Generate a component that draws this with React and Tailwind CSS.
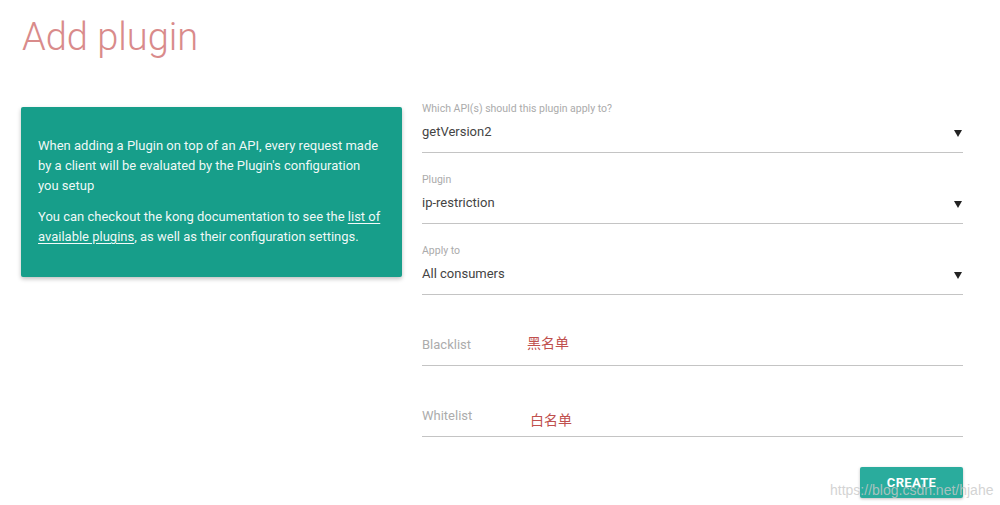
import React from 'react';

const Arrow = () => (
  <svg width="8" height="7" viewBox="0 0 8 7" className="mt-[3px] mr-[1px]">
    <path d="M0 0 L8 0 L4 7 Z" fill="#222" />
  </svg>
);

const SelectField = ({ label, value }) => (
  <div className="h-[71px] flex flex-col pt-[20px] border-b border-[#c4c4c4]">
    <div className="text-[10.5px] leading-[14px] text-[#ababab]">{label}</div>
    <div className="mt-[6px] flex items-center justify-between leading-[20px] text-[13px] text-[#444]">
      <span>{value}</span>
      <Arrow />
    </div>
  </div>
);

const TextField = ({ placeholder, note, noteClass }) => (
  <div className="h-[71px] flex flex-col pt-[40px] border-b border-[#c4c4c4]">
    <div className="flex items-start leading-[20px] text-[13px]">
      <span className="w-[105px] text-[#acacac]">{placeholder}</span>
      <span className={noteClass}>{note}</span>
    </div>
  </div>
);

export default function App() {
  return (
    <div
      className="relative w-[1000px] h-[505px] bg-white overflow-hidden px-[21px]"
      style={{ fontFamily: 'Roboto, "Noto Sans CJK SC", sans-serif' }}
    >
      <h1 className="pt-[18px] pl-[1px] text-[38px] leading-none font-light text-[#d98b8b]">
        Add plugin
      </h1>

      <div className="flex gap-[20px] mt-[26px]">
        <div className="w-[381px] h-[170px] mt-[25px] bg-[#179e8a] rounded-[2px] shadow-[0_2px_4px_rgba(0,0,0,0.25)] pl-[17px] pr-[20px] pt-[29px] text-[13px] leading-[20px] text-white/95">
          <p>
            When adding a Plugin on top of an API, every request made by a client will be evaluated by the Plugin's configuration you setup
          </p>
          <p className="mt-[11px]">
            You can checkout the kong documentation to see the{' '}
            <span className="underline underline-offset-2">list of available plugins</span>, as well as their configuration settings.
          </p>
        </div>

        <div className="w-[541px] flex flex-col">
          <SelectField label="Which API(s) should this plugin apply to?" value="getVersion2" />
          <SelectField label="Plugin" value="ip-restriction" />
          <SelectField label="Apply to" value="All consumers" />
          <TextField placeholder="Blacklist" note="黑名单" noteClass="-mt-[2px] text-[14px] text-[#c0504d]" />
          <TextField placeholder="Whitelist" note="白名单" noteClass="mt-[4px] ml-[3px] text-[14px] text-[#c0504d]" />
          <div className="flex justify-end mt-[30px]">
            <button className="w-[103px] h-[31px] bg-[#2aac9d] rounded-[2px] shadow-[0_1px_3px_rgba(0,0,0,0.25)] text-white text-[13px] font-bold tracking-[0.3px]">
              CREATE
            </button>
          </div>
        </div>
      </div>

      <div
        className="absolute left-[830px] top-[480px] text-[14px] leading-[20px] text-[#c8c8c8]/80"
        style={{ fontFamily: '"Liberation Sans", Arial, sans-serif' }}
      >
        https://blog.csdn.net/hjahe
      </div>
    </div>
  );
}
